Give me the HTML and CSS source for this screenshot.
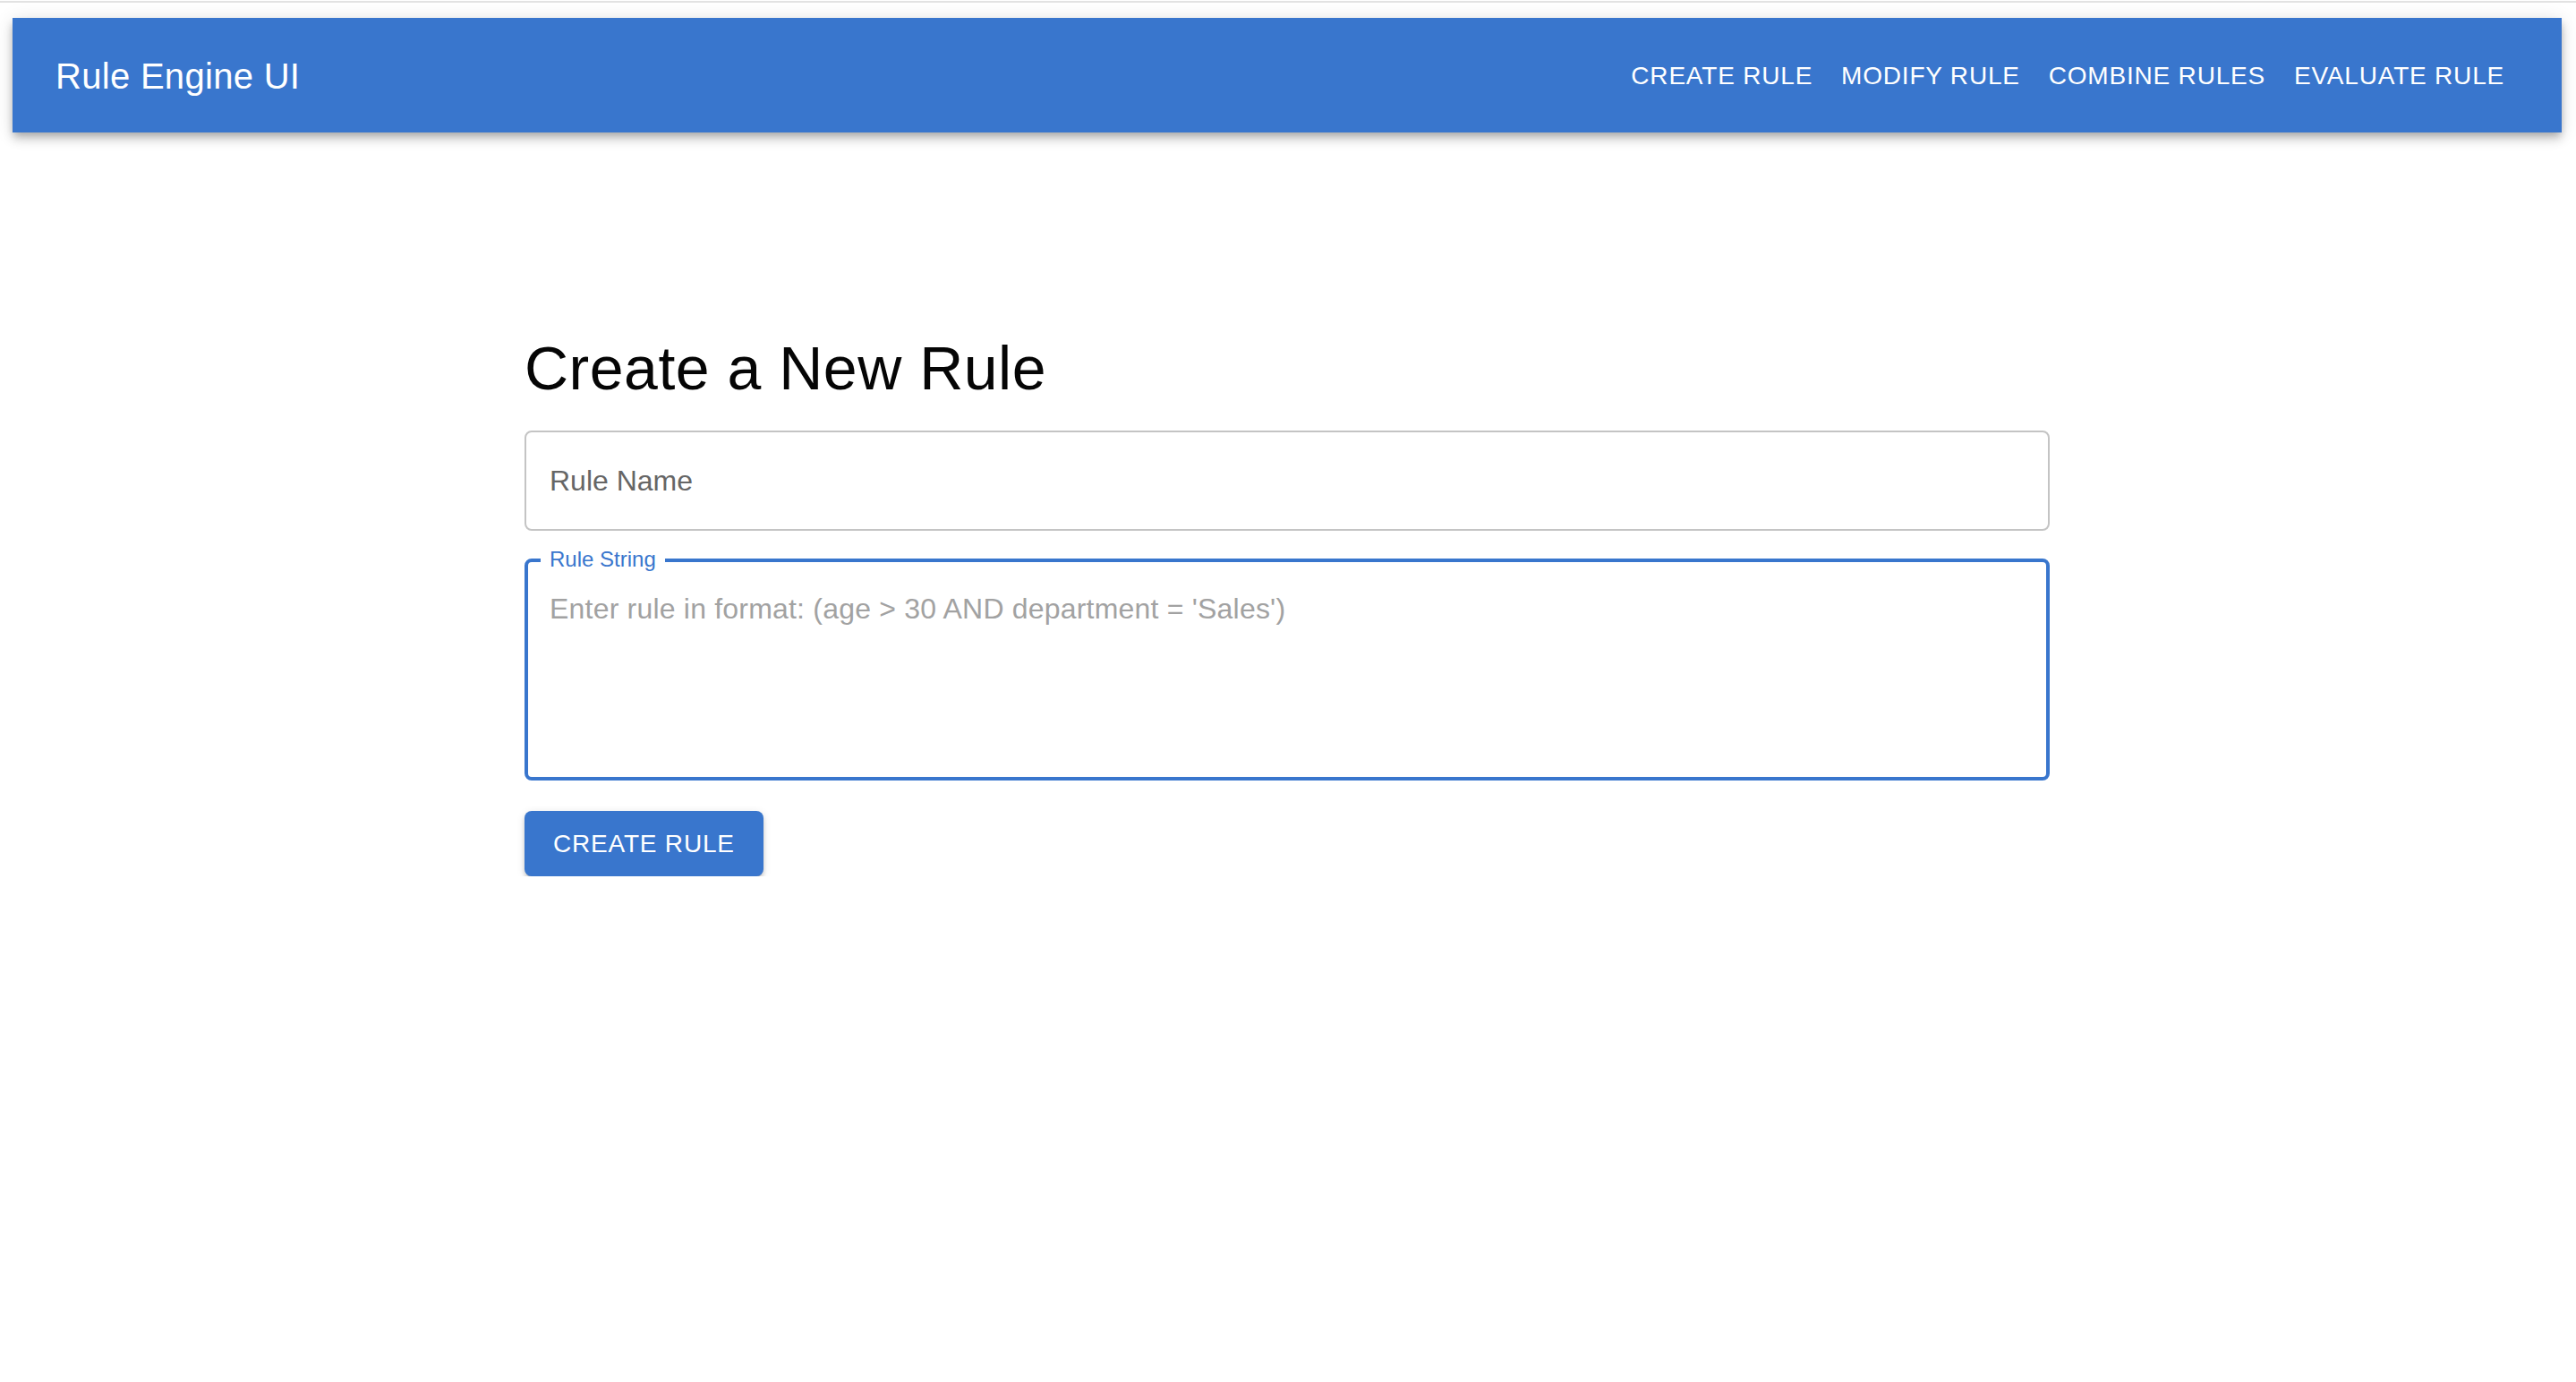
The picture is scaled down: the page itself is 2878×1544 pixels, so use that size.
FILE: index.html
```html
<!DOCTYPE html>
<html lang="en">
<head>
<meta charset="utf-8">
<title>Rule Engine UI</title>
<link rel="stylesheet" href="styles.css">
</head>
<body>
<div class="topline"></div>
<div class="page">
  <header class="appbar">
    <div class="toolbar">
      <div class="brand">Rule Engine UI</div>
      <nav class="nav">
        <a class="nav-btn">Create Rule</a>
        <a class="nav-btn">Modify Rule</a>
        <a class="nav-btn">Combine Rules</a>
        <a class="nav-btn">Evaluate Rule</a>
      </nav>
    </div>
  </header>
  <main class="container">
    <h1 class="heading">Create a New Rule</h1>
    <div class="field">
      <input class="field-input" type="text" placeholder="Rule Name">
    </div>
    <div class="field field-multi">
      <span class="float-label">Rule String</span>
      <textarea class="field-textarea" rows="4" placeholder="Enter rule in format: (age > 30 AND department = 'Sales')"></textarea>
    </div>
    <button class="btn-contained">Create Rule</button>
  </main>
</div>
</body>
</html>
```

FILE: styles.css
```css
* { box-sizing: border-box; }

html, body {
  margin: 0;
  padding: 0;
  background: #ffffff;
  font-family: "Liberation Sans", Arial, Helvetica, sans-serif;
}

.topline {
  height: 2px;
  margin-top: 1px;
  background: #e2e2e2;
}

.page {
  padding: 17px 16px 0 14px;
}

.appbar {
  background: #3976cd;
  color: #ffffff;
  box-shadow: 0 4px 8px -2px rgba(0,0,0,0.2), 0 8px 10px 0 rgba(0,0,0,0.14), 0 2px 20px 0 rgba(0,0,0,0.12);
}

.toolbar {
  height: 128px;
  display: flex;
  align-items: center;
  padding: 0 48px;
}

.brand {
  flex: 1;
  font-size: 40px;
  letter-spacing: 0.3px;
  line-height: 1.6;
  padding-top: 2px;
}

.nav {
  display: flex;
  align-items: center;
}

.nav-btn {
  display: block;
  padding: 12px 16px;
  font-size: 28px;
  line-height: 49px;
  letter-spacing: 0.8px;
  text-transform: uppercase;
  color: #ffffff;
}

.container {
  max-width: 1800px;
  margin: 0 auto;
  padding: 0 48px;
  display: flex;
  flex-direction: column;
  align-items: flex-start;
}

.heading {
  margin: 221px 0 28px 0;
  font-size: 68px;
  font-weight: 400;
  line-height: 84px;
  color: #050505;
  letter-spacing: 0.5px;
}

.field {
  width: 100%;
  height: 112px;
  border: 2px solid #c4c4c4;
  border-radius: 8px;
  display: flex;
  align-items: center;
}

.field-input {
  width: 100%;
  height: 100%;
  border: none;
  outline: none;
  background: transparent;
  padding: 0 26px;
  font-family: "Liberation Sans", Arial, Helvetica, sans-serif;
  font-size: 32px;
  color: #222;
}

.field-input::placeholder {
  color: #666666;
  opacity: 1;
}

.field-multi {
  position: relative;
  margin-top: 31px;
  height: 248px;
  border: 4px solid #3976cd;
  align-items: flex-start;
  padding: 29px 24px 0 24px;
}

.float-label {
  position: absolute;
  top: -17px;
  left: 14px;
  padding: 0 10px;
  background: #ffffff;
  color: #3976cd;
  font-size: 24px;
  line-height: 28px;
}

.field-textarea {
  width: 100%;
  height: 184px;
  border: none;
  outline: none;
  resize: none;
  padding: 0;
  background: transparent;
  font-family: "Liberation Sans", Arial, Helvetica, sans-serif;
  font-size: 32px;
  line-height: 46px;
  color: #222;
  letter-spacing: 0.2px;
}

.field-textarea::placeholder {
  color: #a2a2a2;
  opacity: 1;
}

.btn-contained {
  margin-top: 34px;
  height: 73px;
  padding: 0 32px;
  border: none;
  border-radius: 8px;
  background: #3976cd;
  color: #ffffff;
  font-family: "Liberation Sans", Arial, Helvetica, sans-serif;
  font-size: 28px;
  letter-spacing: 0.8px;
  text-transform: uppercase;
  box-shadow: 0 6px 2px -4px rgba(0,0,0,0.2), 0 4px 4px 0 rgba(0,0,0,0.14), 0 2px 10px 0 rgba(0,0,0,0.12);
}
```
